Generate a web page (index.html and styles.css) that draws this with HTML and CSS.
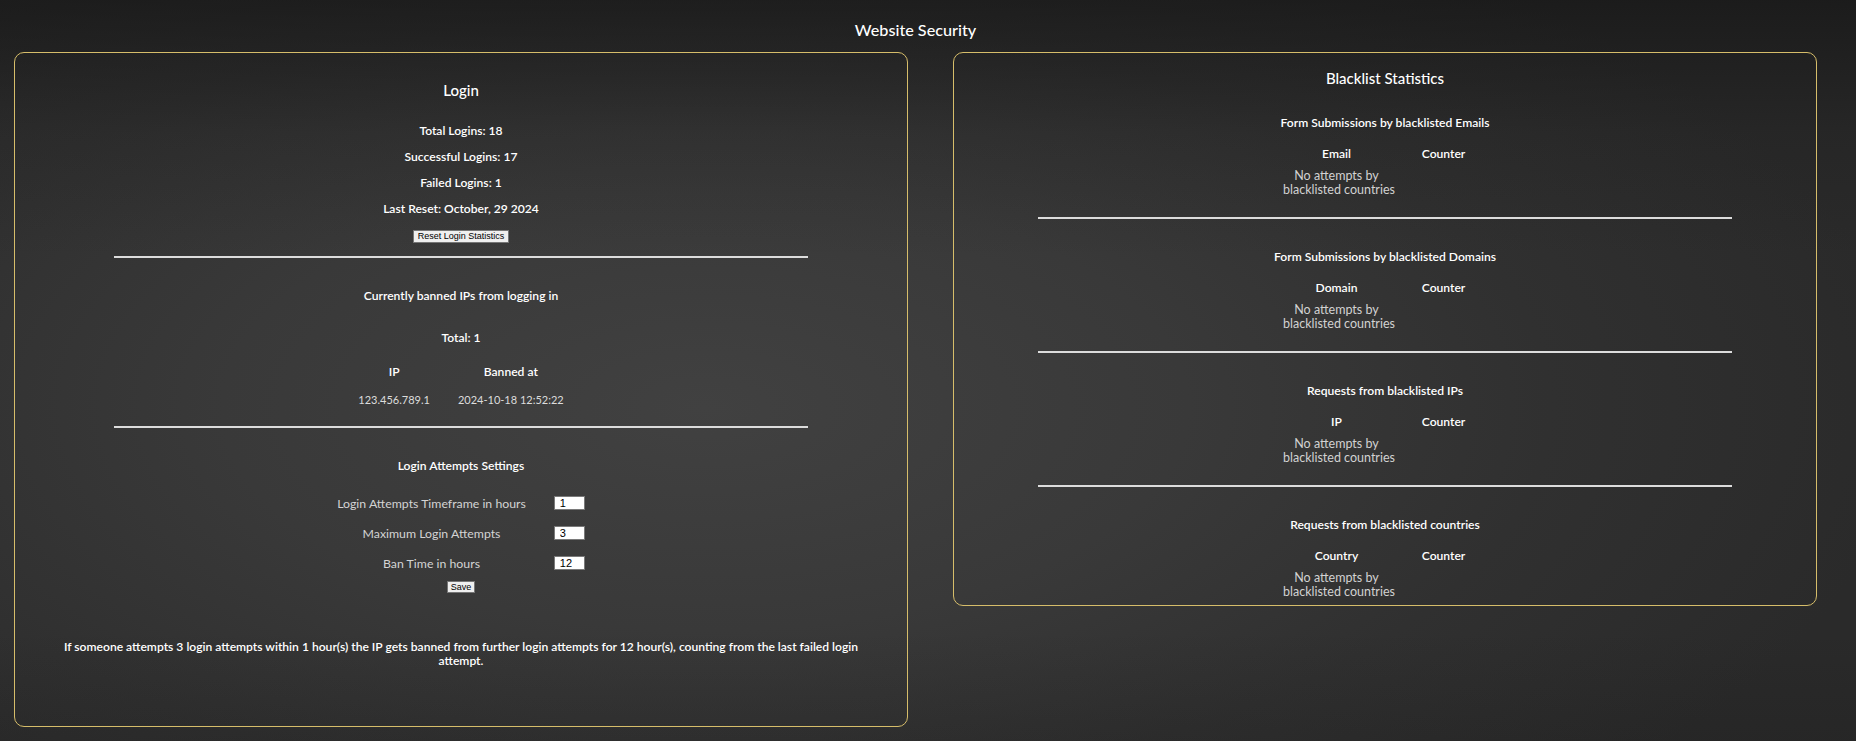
FILE: index.html
```html
<!DOCTYPE html>
<html lang="en">
<head>
<meta charset="utf-8">
<title>Website Security</title>
<link rel="stylesheet" href="styles.css">
</head>
<body>
<div class="page">
  <h1 class="page-title">Website Security</h1>
  <div class="panels">
    <section class="panel panel-login">
      <h2 class="panel-title">Login</h2>
      <div class="stats">
        <p class="stat">Total Logins: 18</p>
        <p class="stat">Successful Logins: 17</p>
        <p class="stat">Failed Logins: 1</p>
        <p class="stat">Last Reset: October, 29 2024</p>
      </div>
      <button class="btn btn-reset" type="button">Reset Login Statistics</button>
      <hr class="divider divider-first">
      <h3 class="sub-title sub-banned">Currently banned IPs from logging in</h3>
      <p class="stat stat-total">Total: 1</p>
      <table class="ban-table">
        <tr><th>IP</th><th>Banned at</th></tr>
        <tr><td>123.456.789.1</td><td>2024-10-18 12:52:22</td></tr>
      </table>
      <hr class="divider divider-second">
      <h3 class="sub-title sub-settings">Login Attempts Settings</h3>
      <table class="settings-table">
        <tr><td class="label">Login Attempts Timeframe in hours</td><td><input class="num" type="text" value="1"></td></tr>
        <tr><td class="label">Maximum Login Attempts</td><td><input class="num" type="text" value="3"></td></tr>
        <tr><td class="label">Ban Time in hours</td><td><input class="num" type="text" value="12"></td></tr>
      </table>
      <button class="btn btn-save" type="button">Save</button>
      <p class="note">If someone attempts 3 login attempts within 1 hour(s) the IP gets banned from further login attempts for 12 hour(s), counting from the last failed login attempt.</p>
    </section>

    <section class="panel panel-blacklist">
      <h2 class="panel-title">Blacklist Statistics</h2>

      <div class="bl-section">
        <h3 class="sub-title">Form Submissions by blacklisted Emails</h3>
        <table class="bl-table">
          <tr><th>Email</th><th>Counter</th></tr>
          <tr><td class="empty">No attempts by<br>blacklisted countries</td><td></td></tr>
        </table>
      </div>
      <hr class="divider bl-divider">

      <div class="bl-section">
        <h3 class="sub-title">Form Submissions by blacklisted Domains</h3>
        <table class="bl-table">
          <tr><th>Domain</th><th>Counter</th></tr>
          <tr><td class="empty">No attempts by<br>blacklisted countries</td><td></td></tr>
        </table>
      </div>
      <hr class="divider bl-divider">

      <div class="bl-section">
        <h3 class="sub-title">Requests from blacklisted IPs</h3>
        <table class="bl-table">
          <tr><th>IP</th><th>Counter</th></tr>
          <tr><td class="empty">No attempts by<br>blacklisted countries</td><td></td></tr>
        </table>
      </div>
      <hr class="divider bl-divider">

      <div class="bl-section">
        <h3 class="sub-title">Requests from blacklisted countries</h3>
        <table class="bl-table">
          <tr><th>Country</th><th>Counter</th></tr>
          <tr><td class="empty">No attempts by<br>blacklisted countries</td><td></td></tr>
        </table>
      </div>
    </section>
  </div>
</div>
</body>
</html>
```

FILE: styles.css
```css
html, body {
  margin: 0;
  padding: 0;
}

body {
  width: 1856px;
  height: 741px;
  overflow: hidden;
  font-family: Lato, "DejaVu Sans", sans-serif;
  color: #ffffff;
  background:
    linear-gradient(180deg, rgba(18,18,18,0.6) 0%, rgba(18,18,18,0.15) 18%, rgba(18,18,18,0) 35%, rgba(18,18,18,0) 85%, rgba(18,18,18,0.15) 100%),
    radial-gradient(ellipse 65% 75% at 38% 55%, #414141 0%, #393939 40%, #303030 70%, #2a2a2a 100%);
}

.page {
  padding: 0 39px 0 14px;
}

.page-title {
  margin: 0;
  padding-top: 20px;
  font-size: 16.2px;
  line-height: 20px;
  font-weight: 500;
  text-align: center;
  color: #ffffff;
}

.panels {
  display: grid;
  grid-template-columns: 894px 864px;
  column-gap: 45px;
  align-items: start;
  margin-top: 12px;
}

.panel {
  border: 1px solid #d6bd6a;
  border-radius: 10px;
  text-align: center;
}

.panel-login {
  padding: 28px 40px 58px;
}

.panel-blacklist {
  padding: 16px 40px 6px;
}

.panel-title {
  margin: 0;
  font-size: 15px;
  line-height: 18px;
  font-weight: 500;
}

.stats {
  margin-top: 24px;
}

.stat {
  margin: 0 0 10px;
  font-size: 12.1px;
  line-height: 16px;
  font-weight: 600;
}

.stats .stat:last-child {
  margin-bottom: 0;
}

.btn {
  display: block;
  margin: 0 auto;
  padding: 0 4px;
  font-family: "Liberation Sans", Arial, sans-serif;
  font-size: 9px;
  line-height: 11px;
  color: #000;
  background: #efefef;
  border: 1px solid #767676;
  border-radius: 0;
}

.btn-reset {
  margin-top: 13px;
}

.btn-save {
  margin-top: 3px;
  padding: 0 3px;
  line-height: 10px;
}

.divider {
  width: 694px;
  height: 2px;
  margin: 0 auto;
  border: 0;
  background: #dcdcdc;
}

.divider-first {
  margin-top: 13px;
}

.divider-second {
  margin-top: 18px;
}

.sub-title {
  margin: 0;
  font-size: 12.1px;
  line-height: 16px;
  font-weight: 600;
}

.sub-banned,
.sub-settings {
  margin-top: 30px;
}

.stat-total {
  margin: 26px 0 0;
}

.ban-table {
  margin: 18px auto 0;
  border-collapse: collapse;
}

.ban-table th {
  padding: 0 14px 12px;
  font-size: 12.1px;
  line-height: 16px;
  font-weight: 600;
}

.ban-table td {
  padding: 0 14px;
  font-size: 11px;
  line-height: 16px;
  color: #dcdcdc;
}

.settings-table {
  margin: 14px auto 0;
  border-collapse: collapse;
}

.settings-table td {
  height: 30px;
  padding: 0 14px;
  vertical-align: middle;
}

.settings-table .label {
  font-size: 12.3px;
  color: #d4d4d4;
  text-align: center;
}

.num {
  display: block;
  box-sizing: border-box;
  width: 31px;
  height: 14px;
  margin: 0;
  padding: 0 0 0 5px;
  font-family: "Liberation Sans", Arial, sans-serif;
  font-size: 11px;
  line-height: 12px;
  text-align: left;
  color: #000;
  background: #fff;
  border: 1px solid #7a7a7a;
  border-radius: 0;
}

.note {
  margin: 47px 0 0;
  font-size: 12.1px;
  line-height: 14px;
  font-weight: 600;
}

.bl-section .sub-title {
  margin-top: 28px;
}

.bl-divider + .bl-section .sub-title {
  margin-top: 30px;
}

.bl-table {
  width: 214px;
  margin: 15px auto 0 calc(50% - 102px);
  border-collapse: collapse;
  table-layout: fixed;
}

.bl-table th {
  width: 107px;
  padding: 0 0 7px;
  font-size: 12.1px;
  line-height: 16px;
  font-weight: 600;
}

.bl-table td {
  padding: 0;
  font-size: 12.5px;
  line-height: 14px;
  color: #d2d2d2;
  white-space: nowrap;
}

.bl-divider {
  margin-top: 20px;
}
```
